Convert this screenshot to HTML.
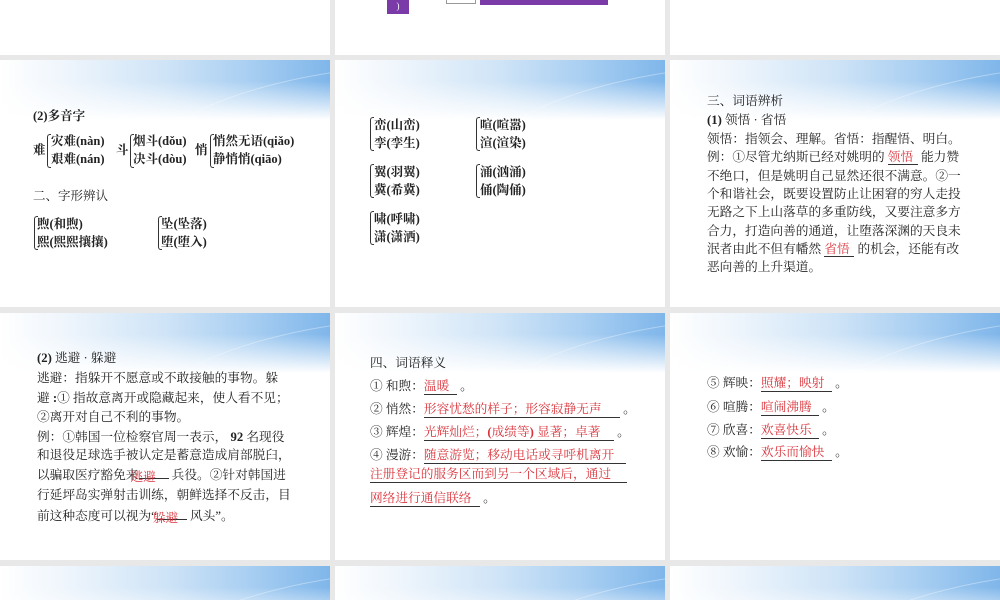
<!DOCTYPE html>
<html style="height:600px;overflow:hidden"><head><meta charset="utf-8"><style>
html,body{height:600px;overflow:hidden}
body{margin:0;width:1000px;background:#e8e8e8;position:relative;font-family:"Liberation Serif","Noto Serif CJK SC",serif;color:#222}
.p{position:absolute;width:330px;height:247px;background:#fff;overflow:hidden}
.hd{position:absolute;left:0;top:0;width:330px;height:60px;
background:linear-gradient(to bottom,rgba(255,255,255,0) 0%,rgba(255,255,255,0) 35%,#fff 100%),linear-gradient(to right,#fff 0%,#eef5fc 20%,#cfe4f7 50%,#a9cff2 75%,#7fb6ea 100%)}
.hd:after{content:"";position:absolute;left:150px;top:10px;width:400px;height:120px;border-radius:50%;border-top:1px solid rgba(255,255,255,.35);transform:rotate(-8deg)}
.t{position:absolute;font-size:12.7px;white-space:nowrap;line-height:18px}
.r{color:#d9333a}
.u{display:inline-block;border-bottom:1px solid #333;text-align:left}
.b{font-weight:bold}
.br{position:absolute;border:1px solid #333;border-right:none;width:3px;border-radius:3px 0 0 3px}
.s{font-size:12.5px;font-weight:bold}
</style></head><body>
<!-- row1 -->
<div class="p" style="left:0;top:-192px"></div>
<div class="p" style="left:335px;top:-192px">
<div style="position:absolute;left:52px;top:178px;width:22px;height:28px;background:#7a3aa8;color:#fff;font-size:9px;text-align:center;line-height:40px">)</div>
<div style="position:absolute;left:111px;top:178px;width:28px;height:16px;border:1px solid #999;background:#fff"></div>
<div style="position:absolute;left:145px;top:178px;width:128px;height:19px;background:#7a3aa8"></div>
</div>
<div class="p" style="left:670px;top:-192px"></div>

<!-- row2 -->
<div class="p" style="left:0;top:60px"><div class="hd"></div>
<div class="t s" style="left:33px;top:47px">(2)多音字</div>
<div class="t s" style="left:33px;top:81px">难</div>
<div class="br" style="left:47px;top:74px;height:32px"></div>
<div class="t s" style="left:51px;top:72px">灾难(nàn)</div>
<div class="t s" style="left:51px;top:90px">艰难(nán)</div>
<div class="t s" style="left:116px;top:81px">斗</div>
<div class="br" style="left:130px;top:74px;height:32px"></div>
<div class="t s" style="left:133px;top:72px">烟斗(dǒu)</div>
<div class="t s" style="left:133px;top:90px">决斗(dòu)</div>
<div class="t s" style="left:195px;top:81px">悄</div>
<div class="br" style="left:210px;top:74px;height:32px"></div>
<div class="t s" style="left:213px;top:72px">悄然无语(qiǎo)</div>
<div class="t s" style="left:213px;top:90px">静悄悄(qiāo)</div>
<div class="t s" style="left:33px;top:127px;font-weight:normal">二、字形辨认</div>
<div class="br" style="left:34px;top:156px;height:32px"></div>
<div class="t s" style="left:37px;top:155px">煦(和煦)</div>
<div class="t s" style="left:37px;top:173px">熙(熙熙攘攘)</div>
<div class="br" style="left:158px;top:156px;height:32px"></div>
<div class="t s" style="left:161px;top:155px">坠(坠落)</div>
<div class="t s" style="left:161px;top:173px">堕(堕入)</div>
</div>

<div class="p" style="left:335px;top:60px"><div class="hd"></div>
<div class="br" style="left:35px;top:57px;height:32px"></div>
<div class="t s" style="left:39px;top:56px">峦(山峦)</div><div class="t s" style="left:39px;top:74px">孪(孪生)</div>
<div class="br" style="left:141px;top:57px;height:32px"></div>
<div class="t s" style="left:145px;top:56px">喧(喧嚣)</div><div class="t s" style="left:145px;top:74px">渲(渲染)</div>
<div class="br" style="left:35px;top:104px;height:32px"></div>
<div class="t s" style="left:39px;top:103px">翼(羽翼)</div><div class="t s" style="left:39px;top:121px">冀(希冀)</div>
<div class="br" style="left:141px;top:104px;height:32px"></div>
<div class="t s" style="left:145px;top:103px">涌(汹涌)</div><div class="t s" style="left:145px;top:121px">俑(陶俑)</div>
<div class="br" style="left:35px;top:151px;height:32px"></div>
<div class="t s" style="left:39px;top:150px">啸(呼啸)</div><div class="t s" style="left:39px;top:168px">潇(潇洒)</div>
</div>

<div class="p" style="left:670px;top:60px"><div class="hd"></div>
<div class="t" style="left:37px;top:32px">三、词语辨析</div>
<div class="t" style="left:37px;top:51px"><b>(1)</b> 领悟 · 省悟</div>
<div class="t" style="left:37px;top:70px">领悟：指领会、理解。省悟：指醒悟、明白。</div>
<div class="t" style="left:37px;top:88px">例：①尽管尤纳斯已经对姚明的 <span class="u r" style="width:30px;line-height:14px">领悟</span> 能力赞</div>
<div class="t" style="left:37px;top:107px">不绝口，但是姚明自己显然还很不满意。②一</div>
<div class="t" style="left:37px;top:125px">个和谐社会，既要设置防止让困窘的穷人走投</div>
<div class="t" style="left:37px;top:143px">无路之下上山落草的多重防线，又要注意多方</div>
<div class="t" style="left:37px;top:162px">合力，打造向善的通道，让堕落深渊的天良未</div>
<div class="t" style="left:37px;top:180px">泯者由此不但有幡然 <span class="u r" style="width:30px;line-height:14px">省悟</span> 的机会，还能有改</div>
<div class="t" style="left:37px;top:198px">恶向善的上升渠道。</div>
</div>

<!-- row3 -->
<div class="p" style="left:0;top:313px"><div class="hd"></div>
<div class="t" style="left:37px;top:36px"><b>(2)</b> 逃避 · 躲避</div>
<div class="t" style="left:37px;top:56px">逃避：指躲开不愿意或不敢接触的事物。躲</div>
<div class="t" style="left:37px;top:76px">避 <b>:</b>① 指故意离开或隐藏起来，使人看不见；</div>
<div class="t" style="left:37px;top:95px">②离开对自己不利的事物。</div>
<div class="t" style="left:37px;top:115px">例：①韩国一位检察官周一表示， <b>92</b> 名现役</div>
<div class="t" style="left:37px;top:133px">和退役足球选手被认定是蓄意造成肩部脱臼，</div>
<div class="t" style="left:37px;top:153px">以骗取医疗豁免来<span class="u" style="width:30px;line-height:12px;position:relative"><span class="r" style="position:absolute;left:-8px;top:-7px">逃避</span></span> 兵役。②针对韩国进</div>
<div class="t" style="left:37px;top:173px">行延坪岛实弹射击训练，朝鲜选择不反击，目</div>
<div class="t" style="left:37px;top:194px">前这种态度可以视为“<span class="u" style="width:30px;line-height:12px;position:relative"><span class="r" style="position:absolute;left:-4px;top:-7px">躲避</span></span> 风头”。</div>
</div>

<div class="p" style="left:335px;top:313px"><div class="hd"></div>
<div class="t" style="left:35px;top:41px">四、词语释义</div>
<div class="t" style="left:35px;top:64px">① 和煦：<span class="u r" style="width:33px;line-height:16px">温暖</span> 。</div>
<div class="t" style="left:35px;top:87px">② 悄然：<span class="u r" style="width:196px;line-height:16px">形容忧愁的样子；形容寂静无声</span> 。</div>
<div class="t" style="left:35px;top:110px">③ 辉煌：<span class="u r" style="width:190px;line-height:16px">光辉灿烂；<b>(</b>成绩等<b>)</b> 显著；卓著</span> 。</div>
<div class="t" style="left:35px;top:133px">④ 漫游：<span class="u r" style="width:202px;line-height:16px">随意游览；移动电话或寻呼机离开</span></div>
<div class="t r" style="left:35px;top:153px;border-bottom:1px solid #333;width:257px;line-height:16px">注册登记的服务区而到另一个区域后，通过</div>
<div class="t" style="left:35px;top:176px"><span class="u r" style="width:110px;line-height:16px">网络进行通信联络</span> 。</div>
</div>

<div class="p" style="left:670px;top:313px"><div class="hd"></div>
<div class="t" style="left:37px;top:61px">⑤ 辉映：<span class="u r" style="width:71px;line-height:16px">照耀；映射</span> 。</div>
<div class="t" style="left:37px;top:85px">⑥ 喧腾：<span class="u r" style="width:58px;line-height:16px">喧闹沸腾</span> 。</div>
<div class="t" style="left:37px;top:108px">⑦ 欣喜：<span class="u r" style="width:58px;line-height:16px">欢喜快乐</span> 。</div>
<div class="t" style="left:37px;top:130px">⑧ 欢愉：<span class="u r" style="width:71px;line-height:16px">欢乐而愉快</span> 。</div>
</div>

<!-- row4 -->
<div class="p" style="left:0;top:566px;height:34px"><div class="hd"></div></div>
<div class="p" style="left:335px;top:566px;height:34px"><div class="hd"></div></div>
<div class="p" style="left:670px;top:566px;height:34px"><div class="hd"></div></div>
</body></html>
